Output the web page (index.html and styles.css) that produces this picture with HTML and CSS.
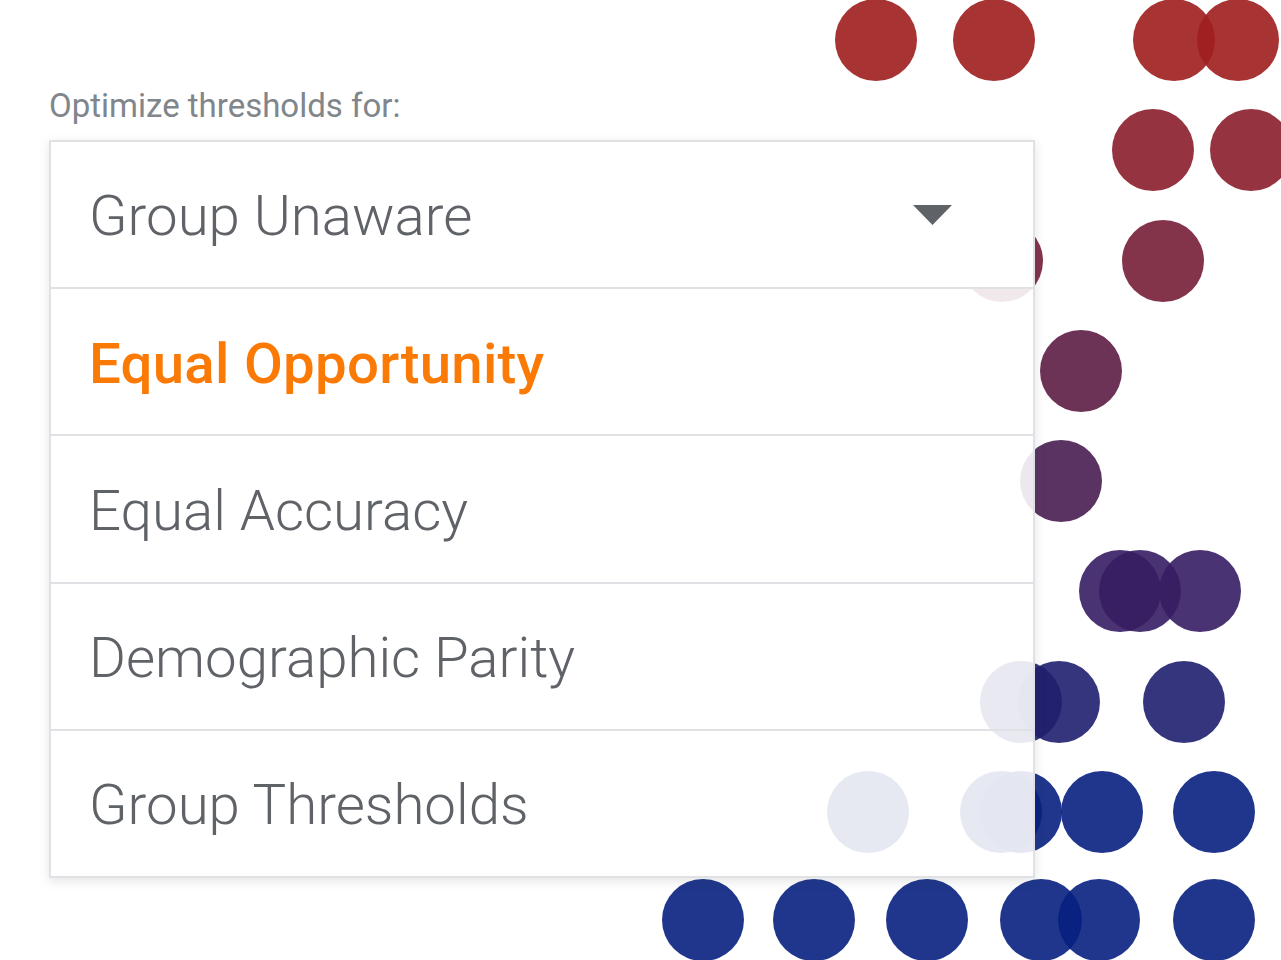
FILE: index.html
```html
<!DOCTYPE html>
<html lang="en">
<head>
<meta charset="utf-8">
<title>Optimize thresholds</title>
<link rel="stylesheet" href="styles.css">
</head>
<body>
<div class="page">
  <div class="dots" aria-hidden="true">
    <span class="dot c1" style="left:876px;top:40px"></span>
    <span class="dot c1" style="left:994px;top:40px"></span>
    <span class="dot c1" style="left:1174px;top:40px"></span>
    <span class="dot c1" style="left:1238px;top:40px"></span>
    <span class="dot c2" style="left:1153px;top:150px"></span>
    <span class="dot c2" style="left:1251px;top:150px"></span>
    <span class="dot c3" style="left:1002px;top:261px"></span>
    <span class="dot c3" style="left:1163px;top:261px"></span>
    <span class="dot c4" style="left:1081px;top:371px"></span>
    <span class="dot c5" style="left:1061px;top:481px"></span>
    <span class="dot c6" style="left:1120px;top:591px"></span>
    <span class="dot c6" style="left:1140px;top:591px"></span>
    <span class="dot c6" style="left:1200px;top:591px"></span>
    <span class="dot c7" style="left:1021px;top:702px"></span>
    <span class="dot c7" style="left:1059px;top:702px"></span>
    <span class="dot c7" style="left:1184px;top:702px"></span>
    <span class="dot c8" style="left:868px;top:812px"></span>
    <span class="dot c8" style="left:1001px;top:812px"></span>
    <span class="dot c8" style="left:1021px;top:812px"></span>
    <span class="dot c8" style="left:1102px;top:812px"></span>
    <span class="dot c8" style="left:1214px;top:812px"></span>
    <span class="dot c8" style="left:703px;top:920px"></span>
    <span class="dot c8" style="left:814px;top:920px"></span>
    <span class="dot c8" style="left:927px;top:920px"></span>
    <span class="dot c8" style="left:1041px;top:920px"></span>
    <span class="dot c8" style="left:1099px;top:920px"></span>
    <span class="dot c8" style="left:1214px;top:920px"></span>
  </div>

  <div class="panel">
    <div class="label">Optimize thresholds for:</div>
    <div class="menu">
      <div class="item head">
        <span class="text">Group Unaware</span>
        <svg class="caret" width="39" height="20" viewBox="0 0 39 20"><path d="M0 0 L39 0 L19.5 20 Z" fill="#5f6368"/></svg>
      </div>
      <div class="item active"><span class="text">Equal Opportunity</span></div>
      <div class="item"><span class="text">Equal Accuracy</span></div>
      <div class="item"><span class="text">Demographic Parity</span></div>
      <div class="item"><span class="text">Group Thresholds</span></div>
    </div>
  </div>
</div>
</body>
</html>
```

FILE: styles.css
```css
html, body {
  margin: 0;
  padding: 0;
  background: #ffffff;
  overflow: hidden;
}

.page {
  position: relative;
  width: 1281px;
  height: 960px;
  overflow: hidden;
  font-family: Roboto, "Noto Sans", "Liberation Sans", sans-serif;
}

.dots {
  position: absolute;
  inset: 0;
  z-index: 0;
}

.dot {
  position: absolute;
  width: 82px;
  height: 82px;
  margin: -41px 0 0 -41px;
  border-radius: 50%;
}

.c1 { background: rgba(158, 29, 29, 0.9); }
.c2 { background: rgba(138, 29, 43, 0.9); }
.c3 { background: rgba(117, 29, 54, 0.9); }
.c4 { background: rgba(92, 29, 68, 0.9); }
.c5 { background: rgba(72, 29, 81, 0.9); }
.c6 { background: rgba(54, 29, 99, 0.9); }
.c7 { background: rgba(31, 31, 111, 0.9); }
.c8 { background: rgba(7, 32, 127, 0.9); }

.panel {
  position: relative;
  z-index: 1;
  display: flex;
  flex-direction: column;
  gap: 15px;
  padding: 87px 0 0 49px;
  width: 986px;
}

.label {
  font-size: 33px;
  line-height: 38px;
  color: #80868b;
  font-weight: 400;
}

.menu {
  box-sizing: border-box;
  width: 986px;
  height: 738px;
  display: flex;
  flex-direction: column;
  border: 2px solid #e0e1e5;
  background: rgba(255, 255, 255, 0.89);
  box-shadow: 0 3px 10px rgba(60, 64, 67, 0.14);
}

.item {
  flex: 1 1 0;
  display: flex;
  align-items: center;
  justify-content: space-between;
  padding: 4px 81px 0 38px;
  font-size: 56.4px;
  font-weight: 300;
  color: #5f6368;
  line-height: 1;
}

.item.head {
  background: #ffffff;
}

.item + .item {
  border-top: 2px solid #e0e1e5;
}

.item.active {
  font-weight: 500;
  letter-spacing: 0.25px;
  color: #fb7a05;
}

.caret {
  display: block;
  margin-top: -4px;
}
```
